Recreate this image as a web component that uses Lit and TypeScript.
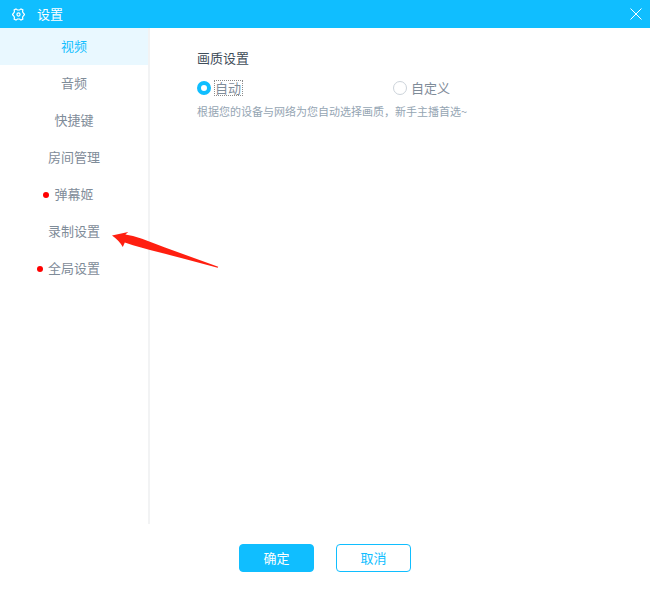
import { LitElement, html, css, svg, nothing } from "lit";
import { customElement, state } from "lit/decorators.js";
import { classMap } from "lit/directives/class-map.js";

interface Section {
  label: string;
  dot?: boolean;
  pointed?: boolean;
}

const SECTIONS: Section[] = [
  { label: "视频" },
  { label: "音频" },
  { label: "快捷键" },
  { label: "房间管理" },
  { label: "弹幕姬", dot: true },
  { label: "录制设置", pointed: true },
  { label: "全局设置", dot: true },
];

const gearShape = svg`
  <path d="M4.6 1 6.3 2.3H8.7L10.4 1 12.5 2.2 12.2 4.4 13.2 6 14.5 7.5 13.2 9 12.2 10.6 12.5 12.8 10.4 14 8.7 12.7H6.3L4.6 14 2.5 12.8 2.8 10.6 1.8 9 .5 7.5 1.8 6 2.8 4.4 2.5 2.2Z"/>
  <circle cx="7.5" cy="7.5" r="1.8"/>`;

@customElement("app-root")
export class AppRoot extends LitElement {
  @state() private current = 0;
  @state() private quality = "auto";

  static styles = css`
    :host {
      display: grid;
      grid-template-rows: 28px 1fr 70px;
      min-height: 100vh;
      background: #fff;
      color: #7f8c99;
      font: 13px/18px "Noto Sans CJK SC", sans-serif;
    }
    * {
      box-sizing: border-box;
    }
    button {
      font: inherit;
      cursor: pointer;
    }
    .titlebar {
      display: flex;
      align-items: center;
      padding: 0 8px 0 12px;
      background: #10beff;
      color: #fff;
    }
    .title {
      flex: 1;
      margin: 0 0 0 12px;
      font-size: 13px;
      font-weight: 400;
    }
    .gear,
    .cross {
      display: block;
      fill: none;
      stroke: currentColor;
    }
    .gear {
      stroke-width: 1.4;
    }
    .close {
      padding: 0;
      border: 0;
      background: none;
      color: #fff;
    }
    .body {
      display: grid;
      grid-template-columns: 150px 1fr;
    }
    .nav {
      border-right: 2px solid #f2f3f4;
    }
    .list {
      margin: 0;
      padding: 0;
      list-style: none;
    }
    .entry {
      position: relative;
    }
    .item {
      display: block;
      width: 100%;
      height: 37px;
      padding: 0 0 2px;
      border: 0;
      background: none;
      color: inherit;
      text-align: center;
    }
    .item.active {
      background: #e9f8ff;
      color: #10beff;
    }
    .name {
      position: relative;
    }
    .dot::before {
      content: "";
      position: absolute;
      left: -11px;
      top: 8px;
      width: 6px;
      height: 6px;
      border-radius: 50%;
      background: #f00;
    }
    .arrow {
      position: absolute;
      left: 110px;
      top: 17px;
      z-index: 1;
      fill: #ff1f10;
      pointer-events: none;
    }
    .panel {
      padding: 21px 24px 0 47px;
    }
    .group {
      margin: 0;
      padding: 0;
      border: 0;
    }
    .legend {
      padding: 0;
      color: #3f4d5a;
    }
    .options {
      display: grid;
      grid-template-columns: 196px 1fr;
      margin-top: 12px;
    }
    .option {
      display: flex;
      align-items: center;
      gap: 4px;
      height: 18px;
    }
    .radio {
      appearance: none;
      width: 14px;
      height: 14px;
      margin: 0;
      border: 1px solid #ccd3da;
      border-radius: 50%;
      outline: none;
    }
    .radio:checked {
      border: 4px solid #10beff;
    }
    .caption {
      padding-right: 1px;
      line-height: 14px;
    }
    .radio:checked + .caption {
      outline: 1px dotted #8c8c8c;
    }
    .hint {
      margin: 6px 0 0;
      color: #95a5b3;
      font-size: 11px;
      line-height: 16px;
    }
    .footer {
      display: flex;
      justify-content: center;
      align-items: flex-start;
      gap: 22px;
      padding-top: 20px;
    }
    .action {
      width: 75px;
      height: 28px;
      padding: 0 0 1px;
      border: 1px solid #10beff;
      border-radius: 4px;
      background: #fff;
      color: #10beff;
    }
    .primary {
      background: #10beff;
      color: #fff;
    }
  `;

  private entry(section: Section, index: number) {
    const active = index === this.current;
    return html`<li class="entry">
      <button
        class=${classMap({ item: true, active })}
        aria-current=${active ? "page" : nothing}
        @click=${() => (this.current = index)}
      ><span class=${classMap({ name: true, dot: !!section.dot })}>${section.label}</span></button>
      ${section.pointed
        ? html`<svg class="arrow" width="110" height="40" viewBox="0 0 110 40" aria-hidden="true">
            <path d="M2 5.6 18.2 1.9 15.4 4.4 23 5.9 32 8.8 55 17.5 108.2 36.8 107.7 37.8 74 28.8 55 23.8 40 20 23 15.2 14.8 12.4 12.8 17Q9 10.5 2 5.6Z" />
          </svg>`
        : nothing}
    </li>`;
  }

  private option(value: string, label: string) {
    return html`<label class="option">
      <input
        class="radio"
        type="radio"
        name="quality"
        value=${value}
        .checked=${this.quality === value}
        @change=${() => (this.quality = value)}
      /><span class="caption">${label}</span>
    </label>`;
  }

  render() {
    return html`
      <header class="titlebar">
        <svg class="gear" width="13" height="13" viewBox="0 0 15 15" aria-hidden="true">${gearShape}</svg>
        <h1 class="title">设置</h1>
        <button class="close" aria-label="关闭">
          <svg class="cross" width="12" height="12" viewBox="0 0 12 12" aria-hidden="true">
            <path d="M.5.5 11.5 11.5M11.5.5.5 11.5" />
          </svg>
        </button>
      </header>
      <div class="body">
        <nav class="nav">
          <ul class="list">${SECTIONS.map((section, index) => this.entry(section, index))}</ul>
        </nav>
        <main class="panel">
          <fieldset class="group">
            <legend class="legend">画质设置</legend>
            <div class="options">${this.option("auto", "自动")}${this.option("custom", "自定义")}</div>
            <p class="hint">根据您的设备与网络为您自动选择画质，新手主播首选~</p>
          </fieldset>
        </main>
      </div>
      <footer class="footer">
        <button class="action primary">确定</button>
        <button class="action">取消</button>
      </footer>
    `;
  }
}
